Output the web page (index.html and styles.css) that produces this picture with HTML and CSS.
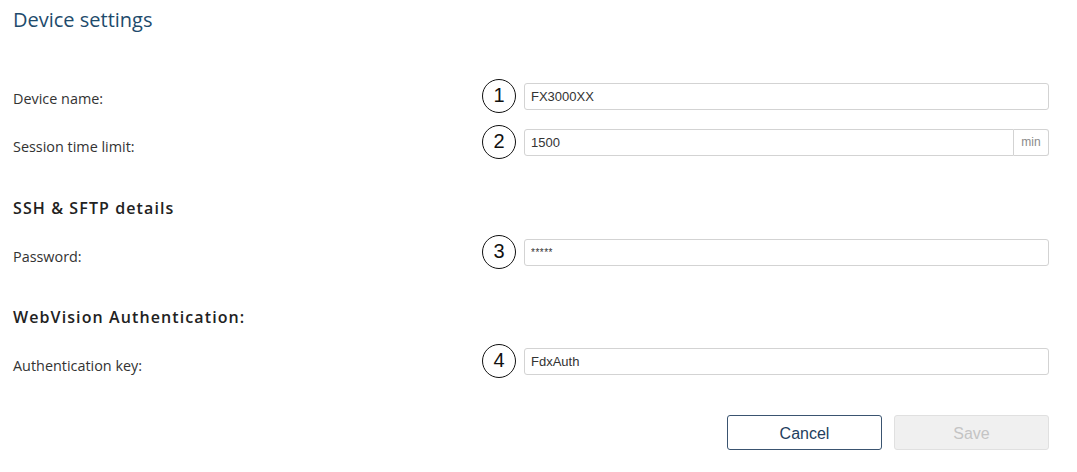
FILE: index.html
```html
<!DOCTYPE html>
<html lang="en">
<head>
<meta charset="utf-8">
<title>Device settings</title>
<link rel="stylesheet" href="styles.css">
</head>
<body>
<main class="page">
  <h1 class="title">Device settings</h1>

  <div class="row row-first">
    <label class="label" for="name">Device name:</label>
    <span class="marker">1</span>
    <div class="field"><input id="name" class="input" type="text" value="FX3000XX"></div>
  </div>

  <div class="row row-next">
    <label class="label" for="limit">Session time limit:</label>
    <span class="marker">2</span>
    <div class="field field-group">
      <input id="limit" class="input input-grouped" type="text" value="1500">
      <span class="addon">min</span>
    </div>
  </div>

  <h2 class="section">SSH &amp; SFTP details</h2>

  <div class="row row-after-section">
    <label class="label" for="pwd">Password:</label>
    <span class="marker">3</span>
    <div class="field"><input id="pwd" class="input input-pwd" type="text" value="*****"></div>
  </div>

  <h2 class="section">WebVision Authentication:</h2>

  <div class="row row-after-section">
    <label class="label" for="key">Authentication key:</label>
    <span class="marker">4</span>
    <div class="field"><input id="key" class="input" type="text" value="FdxAuth"></div>
  </div>

  <div class="actions">
    <button class="btn btn-cancel" type="button">Cancel</button>
    <button class="btn btn-save" type="button" disabled>Save</button>
  </div>
</main>
</body>
</html>
```

FILE: styles.css
```css
* { box-sizing: border-box; }

html, body {
  margin: 0;
  padding: 0;
  background: #ffffff;
}

.page {
  padding: 8px 28px 0 13px;
  font-family: "Open Sans", "Liberation Sans", sans-serif;
  color: #333333;
}

.title {
  margin: 0;
  font-family: "Open Sans", sans-serif;
  font-weight: 400;
  font-size: 20px;
  line-height: 24px;
  color: #1e4b6c;
}

.row {
  display: flex;
  align-items: center;
  height: 34px;
}

.row-first { margin-top: 47px; }
.row-next { margin-top: 12px; }
.row-after-section { margin-top: 17px; }

.label {
  flex: 1;
  font-size: 14.4px;
  line-height: 18px;
  padding-top: 9px;
  color: #333333;
}

.row-first .label { padding-top: 5px; }

.marker {
  width: 34px;
  height: 34px;
  border: 1px solid #111111;
  border-radius: 50%;
  display: flex;
  align-items: center;
  justify-content: center;
  font-family: "Liberation Sans", sans-serif;
  font-size: 20px;
  color: #111111;
  margin-right: 8px;
  padding-bottom: 2px;
}

.field {
  width: 525px;
  display: flex;
}

.input {
  width: 100%;
  height: 27px;
  border: 1px solid #d3d3d3;
  border-radius: 3px;
  padding: 0 6px;
  font-family: "Liberation Sans", sans-serif;
  font-size: 13px;
  color: #333333;
  background: #ffffff;
  outline: none;
}

.input-pwd {
  font-size: 10px;
  letter-spacing: 0.5px;
}

.input-grouped {
  flex: 1;
  border-top-right-radius: 0;
  border-bottom-right-radius: 0;
}

.addon {
  width: 35px;
  height: 27px;
  border: 1px solid #d3d3d3;
  border-left: none;
  border-radius: 0 3px 3px 0;
  display: flex;
  align-items: center;
  justify-content: center;
  font-family: "Liberation Sans", sans-serif;
  font-size: 12px;
  color: #8a8a8a;
}

.section {
  margin: 0;
  font-family: "Open Sans", sans-serif;
  font-weight: 600;
  font-size: 16px;
  line-height: 20px;
  letter-spacing: 1.1px;
  color: #222222;
}

.row-next + .section { margin-top: 39px; }
.row-after-section + .section { margin-top: 38px; }

.actions {
  display: flex;
  justify-content: flex-end;
  gap: 12px;
  margin-top: 37px;
}

.btn {
  width: 155px;
  height: 35px;
  border-radius: 3px;
  font-family: "Liberation Sans", sans-serif;
  font-size: 16px;
  padding: 2px 0 0;
}

.btn-cancel {
  background: #ffffff;
  border: 1px solid #3a5470;
  color: #23405e;
}

.btn-save {
  background: #f0f0f0;
  border: 1px solid #e0e0e0;
  color: #c4c4c4;
}
```
